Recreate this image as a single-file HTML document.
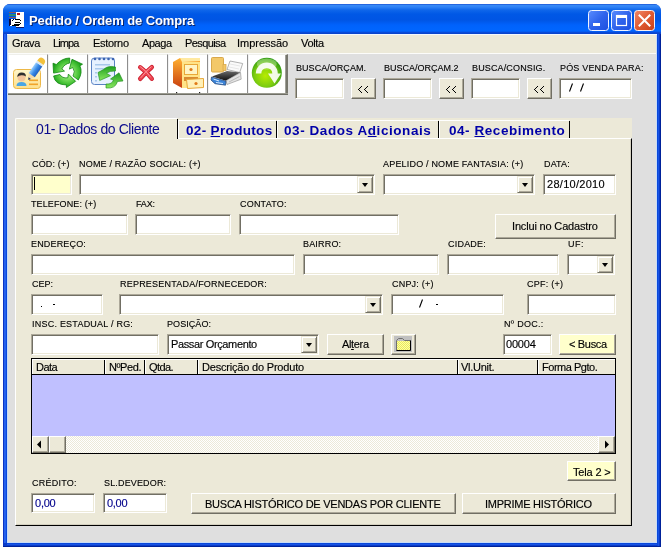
<!DOCTYPE html>
<html><head><meta charset="utf-8"><style>
html,body{margin:0;padding:0;}
body{width:667px;height:548px;overflow:hidden;background:#fff;position:relative;font-family:"Liberation Sans",sans-serif;}
div{box-sizing:border-box;}
.a{position:absolute;}
.t{position:absolute;white-space:nowrap;will-change:transform;font-family:"Liberation Sans",sans-serif;color:#000;}
.in{position:absolute;background:#fff;border-style:solid;border-width:1px;border-color:#ACA899 #fff #fff #ACA899;box-shadow:inset 1px 1px 0 #716F64, inset -1px -1px 0 #ECE9D8;}
.bt{position:absolute;background:#ECE9D8;border-style:solid;border-width:1px;border-color:#fff #716F64 #716F64 #fff;box-shadow:inset -1px -1px 0 #ACA899;}
.dd{position:absolute;background:#ECE9D8;border-style:solid;border-width:1px;border-color:#ECE9D8 #716F64 #716F64 #ECE9D8;box-shadow:inset 1px 1px 0 #fff, inset -1px -1px 0 #ACA899;}
.dd:after{content:"";position:absolute;left:4px;top:6px;border-style:solid;border-width:4px 3.5px 0 3.5px;border-color:#000 transparent transparent transparent;}
.tb{position:absolute;top:54px;width:40px;height:39px;background:#fff;border-top:1px solid #EFEFEA;border-left:1px solid #F2F2F2;border-right:1px solid #8e8e8e;}

</style></head><body>
<!-- window frame -->
<div class="a" style="left:3px;top:4px;width:658px;height:543px;background:#0B45DA;border-radius:7px 7px 0 0;"></div>
<div class="a" style="left:3px;top:30px;width:4px;height:517px;background:linear-gradient(to right,#0A34C4 0,#0A34C4 1px,#2862EE 1px,#2060EC 3px,#0A48DC 3px);"></div>
<div class="a" style="left:657px;top:30px;width:4px;height:517px;background:linear-gradient(to right,#0A48DC 0,#0A48DC 1px,#1A54E4 1px,#1A54E4 2px,#0A3CC8 2px,#0A3CC8 3px,#00229A 3px);"></div>
<div class="a" style="left:7px;top:543px;width:650px;height:4px;background:linear-gradient(to bottom,#0A48DC 0,#0A48DC 1px,#1A54E4 1px,#1A54E4 2px,#0A3CC8 2px,#0A3CC8 3px,#00229A 3px);"></div>
<div class="a" style="left:3px;top:543px;width:4px;height:4px;background:linear-gradient(to right,#0A34C4 0,#0A34C4 1px,#0A3CC8 1px);"></div>
<div class="a" style="left:3px;top:546px;width:658px;height:1px;background:#00229A;"></div>
<!-- title bar -->
<div class="a" style="left:3px;top:4px;width:658px;height:30px;border-radius:7px 7px 0 0;background:linear-gradient(to bottom,#1040C8 0px,#3A8CF6 1px,#2F82F6 3px,#0F66EA 6px,#0058E6 10px,#0055E4 16px,#0062FC 21px,#0066FF 27px,#0A4AD8 28.5px,#0842C8 30px);"></div>
<!-- client -->
<div class="a" style="left:7px;top:34px;width:650px;height:509px;background:#C8DCF8;"></div>
<div class="a" style="left:8px;top:34px;width:648px;height:508px;background:#DFDFDF;"></div>
<!-- menu -->
<div class="a" style="left:8px;top:34px;width:648px;height:19px;background:#ECE9D8;"></div>
<div class="a" style="left:7px;top:34px;width:650px;height:1px;background:#F4F8FE;"></div>
<!-- toolbar buttons -->
<div class="a" style="left:8px;top:53px;width:648px;height:1px;background:#FCFCFA;"></div>
<div class="tb" style="left:8px;"></div>
<div class="tb" style="left:48px;"></div>
<div class="tb" style="left:88px;"></div>
<div class="tb" style="left:128px;"></div>
<div class="tb" style="left:168px;"></div>
<div class="tb" style="left:208px;"></div>
<div class="tb" style="left:248px;border-right:2px solid #76766c;box-shadow:inset -1px 0 0 #a0a098;"></div>
<div class="a" style="left:8px;top:93px;width:280px;height:1px;background:#9A9A90;"></div>
<div class="a" style="left:8px;top:94px;width:280px;height:1px;background:#6F6F66;"></div>
<!-- toolbar inputs -->
<div class="in" style="left:295px;top:78px;width:49px;height:21px;"></div>
<div class="bt" style="left:351px;top:78px;width:25px;height:21px;"></div>
<div class="in" style="left:383px;top:78px;width:49px;height:21px;"></div>
<div class="bt" style="left:439px;top:78px;width:25px;height:21px;"></div>
<div class="in" style="left:471px;top:78px;width:49px;height:21px;"></div>
<div class="bt" style="left:527px;top:78px;width:25px;height:21px;"></div>
<div class="in" style="left:559px;top:78px;width:73px;height:21px;"></div>
<!-- tab strip -->
<div class="a" style="left:15px;top:118px;width:617px;height:20px;background:#ECE9D8;"></div>
<!-- panel -->
<div class="a" style="left:15px;top:138px;width:617px;height:388px;background:#ECE9D8;border-style:solid;border-width:1px;border-color:#fff #000 #000 #fff;box-shadow:inset -1px -1px 0 #D4D0C0;"></div>
<!-- active tab -->
<div class="a" style="left:15px;top:118px;width:162px;height:22px;background:#ECE9D8;border-top:1px solid #fff;border-left:1px solid #fff;border-radius:2px 0 0 0;"></div>
<div class="a" style="left:177px;top:119px;width:1px;height:20px;background:#000;"></div>
<!-- inactive tabs -->
<div class="a" style="left:178px;top:120px;width:98px;height:18px;border-top:1px solid #fff;border-left:1px solid #fff;"></div>
<div class="a" style="left:276px;top:121px;width:1px;height:17px;background:#000;"></div>
<div class="a" style="left:277px;top:120px;width:161px;height:18px;border-top:1px solid #fff;border-left:1px solid #fff;"></div>
<div class="a" style="left:438px;top:121px;width:1px;height:17px;background:#000;"></div>
<div class="a" style="left:439px;top:120px;width:130px;height:18px;border-top:1px solid #fff;border-left:1px solid #fff;"></div>
<div class="a" style="left:569px;top:121px;width:1px;height:17px;background:#000;"></div>
<!-- row1 -->
<div class="in" style="left:31px;top:174px;width:41px;height:21px;background:#FFFFCC;"></div>
<div class="a" style="left:34px;top:177px;width:1px;height:13px;background:#000;"></div>
<div class="in" style="left:79px;top:174px;width:296px;height:21px;"></div>
<div class="dd" style="left:357px;top:176px;width:16px;height:17px;"></div>
<div class="in" style="left:383px;top:174px;width:152px;height:21px;"></div>
<div class="dd" style="left:517px;top:176px;width:16px;height:17px;"></div>
<div class="in" style="left:543px;top:174px;width:73px;height:21px;"></div>
<!-- row2 -->
<div class="in" style="left:31px;top:214px;width:97px;height:21px;"></div>
<div class="in" style="left:135px;top:214px;width:96px;height:21px;"></div>
<div class="in" style="left:239px;top:214px;width:160px;height:21px;"></div>
<div class="bt" style="left:495px;top:214px;width:121px;height:25px;"></div>
<!-- row3 -->
<div class="in" style="left:31px;top:254px;width:264px;height:21px;"></div>
<div class="in" style="left:303px;top:254px;width:136px;height:21px;"></div>
<div class="in" style="left:447px;top:254px;width:112px;height:21px;"></div>
<div class="in" style="left:567px;top:254px;width:48px;height:21px;"></div>
<div class="dd" style="left:597px;top:256px;width:16px;height:17px;"></div>
<!-- row4 -->
<div class="in" style="left:31px;top:294px;width:72px;height:21px;"></div>
<div class="a" style="left:41px;top:306px;width:1px;height:1px;background:#000;"></div>
<div class="a" style="left:53px;top:304px;width:2px;height:1px;background:#000;"></div>
<div class="in" style="left:119px;top:294px;width:264px;height:21px;"></div>
<div class="dd" style="left:365px;top:296px;width:16px;height:17px;"></div>
<div class="in" style="left:391px;top:294px;width:113px;height:21px;"></div>
<div class="a" style="left:436px;top:304px;width:2px;height:1px;background:#000;"></div>
<div class="in" style="left:527px;top:294px;width:89px;height:21px;"></div>
<!-- row5 -->
<div class="in" style="left:31px;top:334px;width:128px;height:21px;"></div>
<div class="in" style="left:167px;top:334px;width:152px;height:21px;"></div>
<div class="dd" style="left:301px;top:336px;width:16px;height:17px;"></div>
<div class="bt" style="left:327px;top:334px;width:57px;height:21px;"></div>
<div class="bt" style="left:391px;top:334px;width:25px;height:21px;"></div>
<div class="in" style="left:503px;top:334px;width:49px;height:21px;"></div>
<div class="bt" style="left:559px;top:334px;width:57px;height:21px;background:#FFFFCC;"></div>
<!-- grid -->
<div class="a" style="left:31px;top:358px;width:585px;height:96px;background:#C0C0FF;border:1px solid #000;"></div>
<div class="a" style="left:32px;top:359px;width:583px;height:16px;background:#ECE9D8;border-top:1px solid #fff;border-bottom:1px solid #000;"></div>
<!-- scrollbar -->
<div class="a" style="left:32px;top:436px;width:583px;height:17px;background-color:#F4F3EE;"></div>
<div class="bt" style="left:32px;top:436px;width:17px;height:17px;"></div>
<div class="bt" style="left:49px;top:436px;width:17px;height:17px;"></div>
<div class="bt" style="left:598px;top:436px;width:17px;height:17px;"></div>
<!-- bottom -->
<div class="bt" style="left:567px;top:461px;width:49px;height:20px;background:#FFFFCC;"></div>
<div class="in" style="left:31px;top:493px;width:64px;height:20px;"></div>
<div class="in" style="left:103px;top:493px;width:64px;height:20px;"></div>
<div class="bt" style="left:191px;top:493px;width:265px;height:21px;"></div>
<div class="bt" style="left:462px;top:493px;width:154px;height:21px;"></div>
<!-- grid header separators -->
<div class="a" style="left:32px;top:360px;width:1px;height:14px;background:#fff;"></div>
<div class="a" style="left:104px;top:360px;width:1px;height:14px;background:#000;"></div>
<div class="a" style="left:105px;top:360px;width:1px;height:14px;background:#fff;"></div>
<div class="a" style="left:144px;top:360px;width:1px;height:14px;background:#000;"></div>
<div class="a" style="left:145px;top:360px;width:1px;height:14px;background:#fff;"></div>
<div class="a" style="left:197px;top:360px;width:1px;height:14px;background:#000;"></div>
<div class="a" style="left:198px;top:360px;width:1px;height:14px;background:#fff;"></div>
<div class="a" style="left:457px;top:360px;width:1px;height:14px;background:#000;"></div>
<div class="a" style="left:458px;top:360px;width:1px;height:14px;background:#fff;"></div>
<div class="a" style="left:537px;top:360px;width:1px;height:14px;background:#000;"></div>
<div class="a" style="left:538px;top:360px;width:1px;height:14px;background:#fff;"></div>
<!-- slashes -->
<svg class="a" style="left:0;top:0" width="667" height="548">
<path d="M569.5 91.5 L572.5 83.5 M580.5 91.5 L583.5 83.5 M419.5 307.5 L422.5 299.5" stroke="#000" stroke-width="1.1"/>
</svg>
<!-- chevrons --><svg class="a" style="left:0;top:0" width="667" height="548" shape-rendering="crispEdges"><g fill="#000"><rect x="361" y="86" width="1" height="1"/><rect x="360" y="87" width="1" height="1"/><rect x="359" y="88" width="1" height="1"/><rect x="358" y="89" width="1" height="1"/><rect x="359" y="90" width="1" height="1"/><rect x="360" y="91" width="1" height="1"/><rect x="361" y="92" width="1" height="1"/><rect x="367" y="86" width="1" height="1"/><rect x="366" y="87" width="1" height="1"/><rect x="365" y="88" width="1" height="1"/><rect x="364" y="89" width="1" height="1"/><rect x="365" y="90" width="1" height="1"/><rect x="366" y="91" width="1" height="1"/><rect x="367" y="92" width="1" height="1"/><rect x="449" y="86" width="1" height="1"/><rect x="448" y="87" width="1" height="1"/><rect x="447" y="88" width="1" height="1"/><rect x="446" y="89" width="1" height="1"/><rect x="447" y="90" width="1" height="1"/><rect x="448" y="91" width="1" height="1"/><rect x="449" y="92" width="1" height="1"/><rect x="455" y="86" width="1" height="1"/><rect x="454" y="87" width="1" height="1"/><rect x="453" y="88" width="1" height="1"/><rect x="452" y="89" width="1" height="1"/><rect x="453" y="90" width="1" height="1"/><rect x="454" y="91" width="1" height="1"/><rect x="455" y="92" width="1" height="1"/><rect x="537" y="86" width="1" height="1"/><rect x="536" y="87" width="1" height="1"/><rect x="535" y="88" width="1" height="1"/><rect x="534" y="89" width="1" height="1"/><rect x="535" y="90" width="1" height="1"/><rect x="536" y="91" width="1" height="1"/><rect x="537" y="92" width="1" height="1"/><rect x="543" y="86" width="1" height="1"/><rect x="542" y="87" width="1" height="1"/><rect x="541" y="88" width="1" height="1"/><rect x="540" y="89" width="1" height="1"/><rect x="541" y="90" width="1" height="1"/><rect x="542" y="91" width="1" height="1"/><rect x="543" y="92" width="1" height="1"/></g></svg>

<svg class="a" style="left:0;top:0" width="667" height="548" viewBox="0 0 667 548">
<defs>
<linearGradient id="gMin" x1="0" y1="0" x2="1" y2="1"><stop offset="0" stop-color="#5A8CFF"/><stop offset="0.5" stop-color="#2F63EC"/><stop offset="1" stop-color="#1C50E0"/></linearGradient>
<linearGradient id="gCls" x1="0" y1="0" x2="1" y2="1"><stop offset="0" stop-color="#F08A6A"/><stop offset="0.5" stop-color="#E05A32"/><stop offset="1" stop-color="#C8401A"/></linearGradient>
<linearGradient id="gCard" x1="0" y1="0" x2="0" y2="1"><stop offset="0" stop-color="#FFF6CC"/><stop offset="1" stop-color="#FDE08C"/></linearGradient>
<linearGradient id="gPen" x1="0" y1="0" x2="0" y2="1"><stop offset="0" stop-color="#9AD0FF"/><stop offset="0.5" stop-color="#3A8CE8"/><stop offset="1" stop-color="#1F5FC0"/></linearGradient>
<radialGradient id="gGreen" cx="67.6" cy="72.7" r="16" gradientUnits="userSpaceOnUse"><stop offset="0.3" stop-color="#90E870"/><stop offset="0.7" stop-color="#46C236"/><stop offset="1" stop-color="#169A16"/></radialGradient>
<linearGradient id="gGreen2" x1="0" y1="0" x2="0" y2="1"><stop offset="0" stop-color="#1FA01F"/><stop offset="1" stop-color="#8AE860"/></linearGradient>
<linearGradient id="gSide" x1="0" y1="0" x2="0" y2="1"><stop offset="0" stop-color="#FFB030"/><stop offset="1" stop-color="#C84010"/></linearGradient>
<radialGradient id="gBall" cx="0.45" cy="0.6" r="0.6"><stop offset="0" stop-color="#B8EC00"/><stop offset="0.6" stop-color="#7CCC10"/><stop offset="1" stop-color="#2E9A12"/></radialGradient>
<linearGradient id="gPrn" x1="0" y1="0" x2="0" y2="1"><stop offset="0" stop-color="#6a6a6a"/><stop offset="1" stop-color="#101010"/></linearGradient>
</defs>
<!-- title buttons -->
<rect x="588.5" y="10.5" width="20" height="20" rx="3" fill="url(#gMin)" stroke="#F0F4FF" stroke-width="1"/>
<rect x="593" y="23" width="7" height="3" fill="#fff"/>
<rect x="611.5" y="10.5" width="20" height="20" rx="3" fill="url(#gMin)" stroke="#F0F4FF" stroke-width="1"/>
<rect x="616.5" y="15.5" width="10" height="10" fill="none" stroke="#fff" stroke-width="1.2"/>
<rect x="616" y="15" width="11" height="3" fill="#fff"/>
<rect x="634.5" y="10.5" width="20" height="20" rx="3" fill="url(#gCls)" stroke="#F8F0F0" stroke-width="1"/>
<path d="M639.5 15.5 L649.5 25.5 M649.5 15.5 L639.5 25.5" stroke="#fff" stroke-width="2" stroke-linecap="square"/>
<!-- title icon -->
<g shape-rendering="crispEdges">
<rect x="16" y="12" width="8" height="15" fill="#fff"/>
<rect x="16" y="27" width="8" height="1" fill="#10186A"/>
<rect x="17" y="13" width="3" height="2" fill="#B81818"/>
<rect x="9" y="12" width="7" height="1" fill="#8A5A5A"/>
<rect x="9" y="14" width="7" height="2" fill="#2A8A78"/>
<rect x="9" y="17" width="7" height="1" fill="#8A5A5A"/>
<rect x="9" y="19" width="2" height="7" fill="#0A0A40"/>
<rect x="11" y="19" width="10" height="7" fill="#fff"/>
<rect x="13" y="19" width="1" height="1" fill="#000"/>
<rect x="12" y="20" width="1" height="1" fill="#000"/>
<rect x="15" y="19" width="5" height="1" fill="#000"/>
<rect x="20" y="20" width="1" height="1" fill="#000"/>
<rect x="15" y="22" width="5" height="1" fill="#000"/>
<rect x="20" y="23" width="1" height="1" fill="#000"/>
<rect x="14" y="24" width="6" height="1" fill="#000"/>
<rect x="12" y="25" width="7" height="1" fill="#000"/>
<rect x="10" y="25" width="1" height="1" fill="#fff"/>
</g>
<!-- icon 1: card + pencil -->
<rect x="13.5" y="69.5" width="27" height="19" rx="3" fill="url(#gCard)" stroke="#EDB848" stroke-width="1"/>
<path d="M16.5 86 q0 -4 5 -4 q5 0 5 4 z" fill="#4AA6E4"/>
<circle cx="21.5" cy="77.5" r="4" fill="#F2C49C"/>
<path d="M17.3 77 q0 -4.5 4.3 -4.5 q4.5 0 4.3 4 q-2 -1.5 -4.5 -1.3 q-2.5 0 -4.1 1.8 z" fill="#2E2E2E"/>
<rect x="29" y="79.5" width="9" height="1.6" fill="#F0A42A"/>
<rect x="29" y="83.5" width="9" height="1.6" fill="#F0A42A"/>
<g transform="translate(28.3,80) rotate(-55)">
<path d="M0 0 L6 -3.8 L6 3.8 Z" fill="#F4D8A8"/>
<path d="M0 0 L2.4 -1.5 L2.4 1.5 Z" fill="#203060"/>
<rect x="6" y="-3.8" width="13" height="7.6" fill="url(#gPen)"/>
<rect x="19" y="-3.8" width="2" height="7.6" fill="#DDE8F0"/>
<path d="M21 -3.8 h1.5 a3.8 3.8 0 0 1 0 7.6 h-1.5 z" fill="#F3C13C"/>
</g>
<!-- icon 2: recycle arrows -->
<g fill="url(#gGreen)" stroke="#128812" stroke-width="0.8" stroke-linejoin="round">
<path d="M69.7 58 Q62 58.2 56.3 64.5 L53 63.2 L53.6 73.1 L64.5 71.1 L61.8 69 Q64.5 63.8 69.7 63 Z"/>
<path d="M72 59.3 L82.5 64.2 L79.9 65.8 Q83 72.5 78.3 80 L73 76 Q75.8 71.5 72.7 67.5 L69.4 69.1 Z"/>
<path d="M53.6 76 Q55 85 66.4 84.9 L66.4 87.5 L75.6 81.3 L68.4 74.1 L67.8 77.8 Q62 78.5 59.9 74.5 Z"/>
</g>
<!-- icon 3: notepad + arrows -->
<rect x="91.5" y="58" width="23" height="26.5" rx="3" fill="#E6F1FF" stroke="#5A82C4" stroke-width="1"/>
<g fill="#3C64B4"><circle cx="95" cy="59" r="1.3"/><circle cx="99.5" cy="59" r="1.3"/><circle cx="104" cy="59" r="1.3"/><circle cx="108.5" cy="59" r="1.3"/><circle cx="113" cy="59" r="1.3"/></g>
<g fill="#A8C8EC"><rect x="95" y="64" width="15" height="1.5"/><rect x="95" y="68" width="12" height="1.5"/><rect x="95" y="72" width="2" height="1.5"/><rect x="95" y="76" width="2" height="1.5"/><rect x="95" y="80" width="2" height="1.5"/></g>
<path d="M115.5 67 Q108 65 103.5 69.5 L98 72.5 L99.7 80.5 L110.5 75.7 L106.5 73.2 Q109.5 70.8 115.5 71 Z" fill="url(#gGreen2)" stroke="#1A8A1A" stroke-width="0.6" stroke-linejoin="round"/>
<path d="M106 88 Q115.5 89 117.5 81.5 L123 81 L119 72.8 L110.5 79 L113.5 80 Q112 84.5 106 84 Z" fill="url(#gGreen2)" stroke="#1A8A1A" stroke-width="0.6" stroke-linejoin="round"/>
<!-- icon 4: red X -->
<path d="M140.2 67.2 Q146.5 71.5 151.8 78.8 M151.8 67.2 Q146 72 140.2 78.8" stroke="#C81C2C" stroke-width="4.4" stroke-linecap="round" fill="none"/>
<path d="M140.2 67.2 Q146.5 71.5 151.8 78.8 M151.8 67.2 Q146 72 140.2 78.8" stroke="#EC4450" stroke-width="3" stroke-linecap="round" fill="none"/>
<path d="M140.5 66.8 Q146 70.5 150.5 77 M151.2 66.8 Q146 71 141 77.5" stroke="#FF9AA0" stroke-width="0.9" stroke-linecap="round" fill="none"/>
<!-- icon 5: filing cabinet -->
<path d="M173 62 L180 58 L200 58 L200 88 L182 88 L173 83 Z" fill="url(#gSide)"/>
<path d="M180 58 L200 58 L200 61 L182 62 Z" fill="#FFE9A0"/>
<rect x="182" y="62" width="18" height="26" fill="#FFE488"/>
<rect x="184.5" y="64.5" width="13" height="10" fill="#FFF4C4" stroke="#E8A838" stroke-width="1"/>
<circle cx="191" cy="69.5" r="1.6" fill="#E07A18"/>
<rect x="184" y="77" width="14" height="4" fill="#D88A30"/>
<path d="M186.5 79.5 L203.5 78.5 L203.5 87.5 L187.5 88.5 Z" fill="#FFF0B8" stroke="#E8A838" stroke-width="1"/>
<circle cx="196" cy="83.5" r="1.6" fill="#E07A18"/>
<rect x="176" y="92" width="1.2" height="1.2" fill="#222"/>
<rect x="199" y="92" width="1.2" height="1.2" fill="#222"/>
<!-- icon 6: folder + printer -->
<rect x="211.5" y="57.5" width="12" height="14.5" rx="1" fill="#F3C868" stroke="#D9A84A" stroke-width="1"/>
<rect x="223" y="64.5" width="3" height="6" fill="#F3C868" stroke="#D9A84A" stroke-width="0.8"/>
<path d="M230 61 L242.7 63.5 L239.7 72.5 L227 69.5 Z" fill="#FAFAFA" stroke="#A0A0A0" stroke-width="0.8"/>
<path d="M230 64 L240 66 M229 67 L239 69" stroke="#DADADA" stroke-width="0.6"/>
<path d="M212 76.5 L227 71 L240.5 72.5 L226 80.7 Z" fill="url(#gPrn)"/>
<path d="M226 80.7 L240.5 72.5 L241.2 79.2 L227 84.5 Z" fill="#E4E4E4" stroke="#8A8A8A" stroke-width="0.6"/>
<path d="M229 82 L239.5 76.5" stroke="#B0B0B0" stroke-width="0.8"/>
<path d="M211.5 77 L226 81.2 L225.5 85.2 L215 83.7 L211 80 Z" fill="#3C84D8" stroke="#1F3F70" stroke-width="0.7"/>
<path d="M213.5 79 L219 81 M216 82.5 L223 83.5" stroke="#D4EAFF" stroke-width="1" fill="none"/>
<!-- icon 7: green ball -->
<circle cx="266.8" cy="72.8" r="15" fill="url(#gBall)"/>
<ellipse cx="266.8" cy="64" rx="10" ry="5.5" fill="#E8FFD0" opacity="0.35"/>
<path d="M255.8 73.5 A11 11 0 0 1 277.8 73.5 L281 73.5 L274.5 83.5 L268 73.5 L272.3 73.5 A5.5 5.5 0 0 0 261.3 73.5 Z" fill="#fff" opacity="0.9"/>
<!-- folder small button -->
<defs><pattern id="dith" width="2" height="2" patternUnits="userSpaceOnUse"><rect width="2" height="2" fill="#FFFFA0"/><rect width="1" height="1" fill="#E8E860"/><rect x="1" y="1" width="1" height="1" fill="#E8E860"/></pattern>
<pattern id="trk" width="2" height="2" patternUnits="userSpaceOnUse"><rect width="2" height="2" fill="#FFFFFF"/><rect width="1" height="1" fill="#ECE9D8"/><rect x="1" y="1" width="1" height="1" fill="#ECE9D8"/></pattern></defs>
<rect x="394" y="336" width="18" height="16" fill="#C0C0C0"/>
<path d="M396.5 350.5 V340.5 L398.5 338.5 H402.5 L404.5 340.5 H410.5" fill="none" stroke="#707070" stroke-width="1"/>
<rect x="397" y="341" width="13" height="9" fill="url(#dith)"/>
<path d="M396.5 350.5 H410.5 V340.5" stroke="#000" stroke-width="1" fill="none"/>
<rect x="66" y="436" width="532" height="17" fill="url(#trk)" shape-rendering="crispEdges"/>
<!-- scroll arrows -->
<path d="M37 444.5 L41 440.5 L41 448.5 Z" fill="#000"/>
<path d="M609 444.5 L605 440.5 L605 448.5 Z" fill="#000"/>
</svg>

<div class="t" style="left:29.00px;top:14px;font-size:13px;line-height:13px;font-weight:bold;color:#fff;letter-spacing:-0.102px;text-shadow:1px 1px 0 #0a246a;">Pedido / Ordem de Compra</div>
<div class="t" style="left:12.40px;top:38px;font-size:11px;line-height:11px;letter-spacing:-0.409px;-webkit-text-stroke:0.15px #000;">Grava</div>
<div class="t" style="left:53.30px;top:38px;font-size:11px;line-height:11px;letter-spacing:-0.911px;-webkit-text-stroke:0.15px #000;">Limpa</div>
<div class="t" style="left:92.90px;top:38px;font-size:11px;line-height:11px;letter-spacing:-0.315px;-webkit-text-stroke:0.15px #000;">Estorno</div>
<div class="t" style="left:141.60px;top:38px;font-size:11px;line-height:11px;letter-spacing:-0.447px;-webkit-text-stroke:0.15px #000;">Apaga</div>
<div class="t" style="left:184.50px;top:38px;font-size:11px;line-height:11px;letter-spacing:-0.591px;-webkit-text-stroke:0.15px #000;">Pesquisa</div>
<div class="t" style="left:237.40px;top:38px;font-size:11px;line-height:11px;letter-spacing:-0.017px;-webkit-text-stroke:0.15px #000;">Impressão</div>
<div class="t" style="left:300.50px;top:38px;font-size:11px;line-height:11px;letter-spacing:-0.337px;-webkit-text-stroke:0.15px #000;">Volta</div>
<div class="t" style="left:295.50px;top:64px;font-size:9px;line-height:9px;letter-spacing:0.045px;-webkit-text-stroke:0.12px #000;">BUSCA/ORÇAM.</div>
<div class="t" style="left:383.70px;top:64px;font-size:9px;line-height:9px;-webkit-text-stroke:0.12px #000;">BUSCA/ORÇAM.2</div>
<div class="t" style="left:471.80px;top:64px;font-size:9px;line-height:9px;letter-spacing:0.141px;-webkit-text-stroke:0.12px #000;">BUSCA/CONSIG.</div>
<div class="t" style="left:559.60px;top:64px;font-size:9px;line-height:9px;letter-spacing:0.182px;-webkit-text-stroke:0.12px #000;">PÓS VENDA PARA:</div>
<div class="t" style="left:31.60px;top:160px;font-size:9px;line-height:9px;letter-spacing:0.164px;-webkit-text-stroke:0.12px #000;">CÓD: (+)</div>
<div class="t" style="left:79.30px;top:160px;font-size:9px;line-height:9px;letter-spacing:0.188px;-webkit-text-stroke:0.12px #000;">NOME / RAZÃO SOCIAL: (+)</div>
<div class="t" style="left:383.10px;top:160px;font-size:9px;line-height:9px;letter-spacing:0.188px;-webkit-text-stroke:0.12px #000;">APELIDO / NOME FANTASIA: (+)</div>
<div class="t" style="left:543.70px;top:160px;font-size:9px;line-height:9px;letter-spacing:0.133px;-webkit-text-stroke:0.12px #000;">DATA:</div>
<div class="t" style="left:31.20px;top:200px;font-size:9px;line-height:9px;letter-spacing:0.120px;-webkit-text-stroke:0.12px #000;">TELEFONE: (+)</div>
<div class="t" style="left:135.60px;top:200px;font-size:9px;line-height:9px;letter-spacing:-0.136px;-webkit-text-stroke:0.12px #000;">FAX:</div>
<div class="t" style="left:239.70px;top:200px;font-size:9px;line-height:9px;letter-spacing:0.200px;-webkit-text-stroke:0.12px #000;">CONTATO:</div>
<div class="t" style="left:31.40px;top:240px;font-size:9px;line-height:9px;letter-spacing:0.162px;-webkit-text-stroke:0.12px #000;">ENDEREÇO:</div>
<div class="t" style="left:303.40px;top:240px;font-size:9px;line-height:9px;letter-spacing:0.182px;-webkit-text-stroke:0.12px #000;">BAIRRO:</div>
<div class="t" style="left:447.70px;top:240px;font-size:9px;line-height:9px;letter-spacing:0.216px;-webkit-text-stroke:0.12px #000;">CIDADE:</div>
<div class="t" style="left:567.60px;top:240px;font-size:9px;line-height:9px;letter-spacing:0.551px;-webkit-text-stroke:0.12px #000;">UF:</div>
<div class="t" style="left:31.50px;top:280px;font-size:9px;line-height:9px;-webkit-text-stroke:0.12px #000;">CEP:</div>
<div class="t" style="left:119.60px;top:280px;font-size:9px;line-height:9px;letter-spacing:0.215px;-webkit-text-stroke:0.12px #000;">REPRESENTADA/FORNECEDOR:</div>
<div class="t" style="left:391.60px;top:280px;font-size:9px;line-height:9px;letter-spacing:0.206px;-webkit-text-stroke:0.12px #000;">CNPJ: (+)</div>
<div class="t" style="left:527.40px;top:280px;font-size:9px;line-height:9px;letter-spacing:0.249px;-webkit-text-stroke:0.12px #000;">CPF: (+)</div>
<div class="t" style="left:31.60px;top:320px;font-size:9px;line-height:9px;letter-spacing:0.229px;-webkit-text-stroke:0.12px #000;">INSC. ESTADUAL / RG:</div>
<div class="t" style="left:167.40px;top:320px;font-size:9px;line-height:9px;letter-spacing:0.070px;-webkit-text-stroke:0.12px #000;">POSIÇÃO:</div>
<div class="t" style="left:503.60px;top:320px;font-size:9px;line-height:9px;letter-spacing:0.288px;-webkit-text-stroke:0.12px #000;">Nº DOC.:</div>
<div class="t" style="left:31.70px;top:479px;font-size:9px;line-height:9px;letter-spacing:0.252px;-webkit-text-stroke:0.12px #000;">CRÉDITO:</div>
<div class="t" style="left:103.70px;top:479px;font-size:9px;line-height:9px;letter-spacing:0.158px;-webkit-text-stroke:0.12px #000;">SL.DEVEDOR:</div>
<div class="t" style="left:546.80px;top:179px;font-size:11px;line-height:11px;letter-spacing:0.285px;-webkit-text-stroke:0.15px #000;">28/10/2010</div>
<div class="t" style="left:512.30px;top:221px;font-size:11px;line-height:11px;letter-spacing:-0.167px;-webkit-text-stroke:0.15px #000;">Inclui no Cadastro</div>
<div class="t" style="left:170.70px;top:339px;font-size:11px;line-height:11px;letter-spacing:-0.366px;-webkit-text-stroke:0.15px #000;">Passar Orçamento</div>
<div class="t" style="left:341.50px;top:339px;font-size:11px;line-height:11px;letter-spacing:-0.344px;-webkit-text-stroke:0.15px #000;">Al<u>t</u>era</div>
<div class="t" style="left:506.30px;top:339px;font-size:11px;line-height:11px;letter-spacing:-0.193px;-webkit-text-stroke:0.15px #000;">00004</div>
<div class="t" style="left:568.70px;top:339px;font-size:11px;line-height:11px;letter-spacing:-0.322px;-webkit-text-stroke:0.15px #000;">&lt; Busca</div>
<div class="t" style="left:35.50px;top:362px;font-size:11px;line-height:11px;letter-spacing:-0.539px;-webkit-text-stroke:0.15px #000;">Data</div>
<div class="t" style="left:108.50px;top:362px;font-size:11px;line-height:11px;letter-spacing:-0.427px;-webkit-text-stroke:0.15px #000;">NºPed.</div>
<div class="t" style="left:148.60px;top:362px;font-size:11px;line-height:11px;letter-spacing:-0.562px;-webkit-text-stroke:0.15px #000;">Qtda.</div>
<div class="t" style="left:201.80px;top:362px;font-size:11px;line-height:11px;letter-spacing:-0.193px;-webkit-text-stroke:0.15px #000;">Descrição do Produto</div>
<div class="t" style="left:460.50px;top:362px;font-size:11px;line-height:11px;letter-spacing:-0.271px;-webkit-text-stroke:0.15px #000;">Vl.Unit.</div>
<div class="t" style="left:541.60px;top:362px;font-size:11px;line-height:11px;letter-spacing:-0.477px;-webkit-text-stroke:0.15px #000;">Forma Pgto.</div>
<div class="t" style="left:573.00px;top:467px;font-size:11px;line-height:11px;letter-spacing:-0.158px;-webkit-text-stroke:0.15px #000;">Tela 2 &gt;</div>
<div class="t" style="left:34.70px;top:498px;font-size:11px;line-height:11px;color:#00008b;letter-spacing:-0.231px;-webkit-text-stroke:0.15px #00008b;">0,00</div>
<div class="t" style="left:106.80px;top:498px;font-size:11px;line-height:11px;color:#00008b;letter-spacing:-0.297px;-webkit-text-stroke:0.15px #00008b;">0,00</div>
<div class="t" style="left:205.40px;top:499px;font-size:11px;line-height:11px;letter-spacing:-0.243px;-webkit-text-stroke:0.15px #000;">BUSCA HISTÓRICO DE VENDAS POR CLIENTE</div>
<div class="t" style="left:484.50px;top:499px;font-size:11px;line-height:11px;letter-spacing:-0.261px;-webkit-text-stroke:0.15px #000;">IMPRIME HISTÓRICO</div>
<div class="t" style="left:36.40px;top:122px;font-size:14px;line-height:14px;color:#0a0a8c;letter-spacing:-0.407px;">01- Dados do Cliente</div>
<div class="t" style="left:185.70px;top:123.5px;font-size:13.5px;line-height:13.5px;font-weight:bold;color:#0000a8;letter-spacing:0.336px;">02- <u>P</u>rodutos</div>
<div class="t" style="left:284.20px;top:123.5px;font-size:13.5px;line-height:13.5px;font-weight:bold;color:#0000a8;letter-spacing:0.567px;">03- Dados A<u>d</u>icionais</div>
<div class="t" style="left:448.90px;top:123.5px;font-size:13.5px;line-height:13.5px;font-weight:bold;color:#0000a8;letter-spacing:0.551px;">04- <u>R</u>ecebimento</div>
</body></html>
